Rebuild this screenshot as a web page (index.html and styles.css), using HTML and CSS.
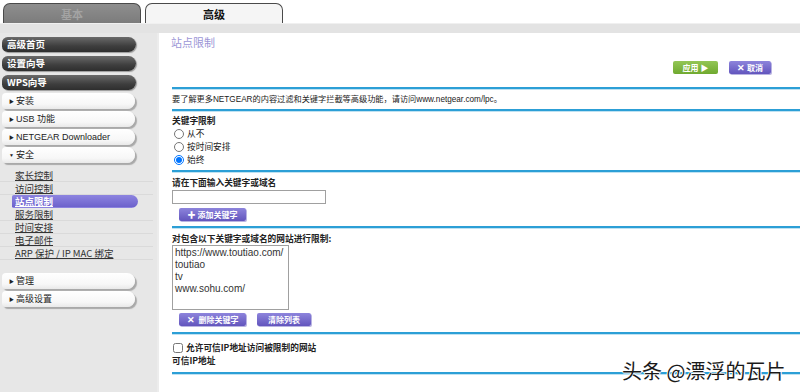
FILE: index.html
```html
<!DOCTYPE html>
<html lang="zh-CN">
<head>
    <meta charset="UTF-8">
    <title>站点限制</title>
    <link rel="stylesheet" href="styles.css">
</head>
<body>
    <div class="tabs">
        <div class="tab tab-off">基本</div>
        <div class="tab tab-on">高级</div>
    </div>
    <div class="band"></div>
    <div class="main">
        <div class="sidebar">
            <div class="dark-btn">高级首页</div>
            <div class="dark-btn">设置向导</div>
            <div class="dark-btn">WPS向导</div>
            <div class="menu-btn first"><i class="tri">&#9654;</i>安装</div>
            <div class="menu-btn"><i class="tri">&#9654;</i>USB 功能</div>
            <div class="menu-btn"><i class="tri">&#9654;</i>NETGEAR Downloader</div>
            <div class="menu-btn"><i class="tri">&#9660;</i>安全</div>
            <div class="sub-list">
                <div class="sub-item"><span>家长控制</span></div>
                <div class="sub-item"><span>访问控制</span></div>
                <div class="sub-item active"><span>站点限制</span></div>
                <div class="sub-item"><span>服务限制</span></div>
                <div class="sub-item"><span>时间安排</span></div>
                <div class="sub-item"><span>电子邮件</span></div>
                <div class="sub-item"><span>ARP 保护 / IP MAC 绑定</span></div>
            </div>
            <div class="menu-btn"><i class="tri">&#9654;</i>管理</div>
            <div class="menu-btn"><i class="tri">&#9654;</i>高级设置</div>
        </div>
        <div class="content">
            <div class="section header">
                <div class="page-title">站点限制</div>
                <div class="actions">
                    <span class="btn btn-green">应用 &#9654;</span>
                    <span class="btn btn-purple"><b class="x">&#10005;</b>取消</span>
                </div>
            </div>
            <div class="section info">要了解更多NETGEAR的内容过滤和关键字拦截等高级功能，请访问www.netgear.com/lpc。</div>
            <div class="section keywords">
                <div class="label">关键字限制</div>
                <label class="opt"><input type="radio" name="mode">从不</label>
                <label class="opt"><input type="radio" name="mode">按时间安排</label>
                <label class="opt"><input type="radio" name="mode" checked>始终</label>
            </div>
            <div class="section add">
                <div class="label">请在下面输入关键字或域名</div>
                <input type="text" class="kw-input">
                <div class="btn-row"><span class="btn btn-purple wide">&#10010; 添加关键字</span></div>
            </div>
            <div class="section list">
                <div class="label">对包含以下关键字或域名的网站进行限制:</div>
                <div class="kw-box">https://www.toutiao.com/<br>toutiao<br>tv<br>www.sohu.com/</div>
                <div class="btn-row">
                    <span class="btn btn-purple wide"><b class="x">&#10005;</b> 删除关键字</span>
                    <span class="btn btn-purple clear">清除列表</span>
                </div>
            </div>
            <div class="section trusted">
                <label class="opt bold"><input type="checkbox">允许可信IP地址访问被限制的网站</label>
                <div class="label">可信IP地址</div>
            </div>
        </div>
    </div>
    <div class="watermark">头条 @漂浮的瓦片</div>
</body>
</html>
```

FILE: styles.css
```css
body {
    margin: 0;
    background: #fff;
    font-family: "Liberation Sans", Arial, "Noto Sans CJK SC", sans-serif;
    font-size: 9px;
    color: #222;
    width: 800px;
    height: 392px;
    overflow: hidden;
    position: relative;
}
.tabs {
    display: flex;
    gap: 4px;
    padding: 3px 0 0 3px;
    height: 20px;
}
.tab {
    width: 136px;
    height: 19px;
    border: 1px solid #4a4a4a;
    border-bottom: none;
    border-radius: 7px 7px 0 0;
    text-align: center;
    line-height: 20px;
    font-size: 11px;
    font-weight: bold;
    font-family: "Noto Sans CJK SC", sans-serif;
}
.tab-off {
    background: linear-gradient(#8e8e8e, #7c7c7c);
    color: #a3a3a3;
}
.tab-on {
    background: #f5f5f5;
    color: #111;
}
.band {
    height: 9px;
    background: #e3e3e3;
    border-top: 1px solid #f0f0f0;
}
.main {
    display: flex;
    height: 359px;
}
.sidebar {
    width: 157px;
    background: #e7e7e7;
    border-right: 2px solid #ececec;
    padding-top: 4px;
    font-family: "Noto Sans CJK SC", sans-serif;
}
.dark-btn {
    margin: 0 0 4px 2px;
    width: 129px;
    height: 15px;
    padding-left: 5px;
    border-radius: 6px 8px 8px 6px;
    background: linear-gradient(#6a6a6a, #3e3e3e 60%, #2e2e2e);
    box-shadow: 1px 1px 1px #9a9a9a;
    color: #fff;
    font-size: 9.5px;
    font-weight: bold;
    line-height: 15px;
}
.menu-btn {
    margin: 0 0 2px 2px;
    width: 126px;
    height: 16px;
    padding-left: 7px;
    border-radius: 4px 8px 8px 4px;
    background: linear-gradient(#ffffff, #f7f7f7 70%, #e9e9e9);
    box-shadow: 2px 2px 1px #a9a9a9;
    color: #222;
    font-family: "Liberation Sans", Arial, "Noto Sans CJK SC", sans-serif;
    font-size: 9px;
    line-height: 16px;
}
.menu-btn.first {
    margin-top: -1px;
}
.tri {
    font-style: normal;
    font-size: 5px;
    margin-right: 2px;
    vertical-align: 1px;
}
.sub-list {
    margin: 6px 0 13px;
}
.sub-item {
    width: 138px;
    height: 12px;
    line-height: 12px;
    border-bottom: 1px solid #dadada;
    padding-left: 15px;
    box-sizing: content-box;
    font-size: 9.5px;
    color: #333;
}
.sub-item span {
    text-decoration: underline;
}
.sub-item.active {
    width: 123px;
    margin-left: 12px;
    padding-left: 3px;
    background: linear-gradient(#8d84e0, #6d62cc);
    border-radius: 2px 7px 7px 2px;
    color: #fff;
    font-weight: bold;
    border-bottom-color: transparent;
}
.content {
    flex: 1;
    background: #fff;
    padding-left: 13px;
}
.section {
    border-bottom: 2px solid #2c9fd6;
    box-shadow: 0 1px 0 #bfe2f2;
}
.header {
    padding: 3px 0 13px;
    height: 38px;
}
.page-title {
    font-family: "Noto Sans CJK SC", sans-serif;
    font-size: 11px;
    line-height: 13px;
    color: #9c96d6;
    margin-left: -1px;
}
.actions {
    display: flex;
    justify-content: flex-end;
    gap: 11px;
    margin-top: 12px;
    padding-right: 29px;
}
.btn {
    display: inline-block;
    height: 13px;
    line-height: 13px;
    color: #fff;
    font-weight: bold;
    font-size: 8px;
    text-align: center;
    border-radius: 2px;
    font-family: "Noto Sans CJK SC", sans-serif;
}
.btn-green {
    width: 45px;
    background: linear-gradient(#93c656, #6fa92f);
}
.btn-purple {
    width: 42px;
    background: linear-gradient(#8d84dc, #6255bd);
    box-shadow: 1px 1px 0 #b9b4e2;
}
.x {
    font-size: 9px;
    margin-right: 2px;
}
.info {
    padding: 4px 0 3px;
    line-height: 13px;
    font-size: 8.2px;
    font-family: "Liberation Sans", "Noto Sans CJK SC", sans-serif;
}
.label {
    line-height: 13px;
    font-weight: bold;
    font-size: 8.7px;
    font-family: "Noto Sans CJK SC", sans-serif;
}
.keywords {
    padding: 3px 0 4px;
}
.opt {
    display: flex;
    align-items: center;
    line-height: 13px;
    height: 13px;
    font-size: 8.7px;
    font-family: "Noto Sans CJK SC", sans-serif;
}
.opt input {
    width: 10px;
    height: 10px;
    margin: 0 3px 0 2px;
}
.opt.bold {
    font-weight: bold;
}
.opt.bold input {
    margin-left: 1px;
}
.add {
    padding: 4px 0 6px;
    height: 44px;
}
.kw-input {
    display: block;
    box-sizing: border-box;
    width: 154px;
    height: 14px;
    margin: 1px 0 0;
    padding: 0;
    border: 1px solid #a0a0a0;
}
.btn-row {
    display: flex;
    gap: 11px;
    margin: 4px 0 0 7px;
}
.wide {
    width: 67px;
}
.clear {
    width: 54px;
}
.list {
    padding: 4px 0 6px;
}
.kw-box {
    box-sizing: border-box;
    width: 117px;
    height: 65px;
    border: 1px solid #a0a0a0;
    padding: 1px 2px;
    font-family: "Liberation Sans", Arial, sans-serif;
    font-size: 10px;
    line-height: 12px;
    color: #333;
}
.list .btn-row {
    margin-top: 3px;
}
.trusted {
    padding: 7px 0 5px;
}
.watermark {
    position: absolute;
    left: 622px;
    top: 358px;
    font-family: "Noto Sans CJK SC", sans-serif;
    font-size: 20px;
    line-height: 26px;
    color: #1a1a1a;
    text-shadow: 1px 0 0 #fff, -1px 0 0 #fff, 0 1px 0 #fff, 0 -1px 0 #fff;
}
```
